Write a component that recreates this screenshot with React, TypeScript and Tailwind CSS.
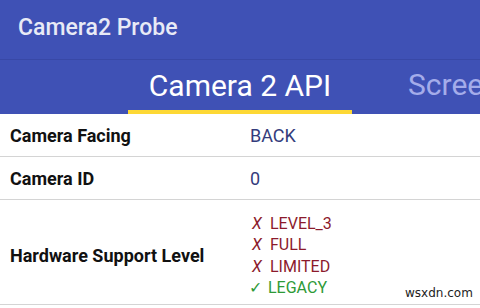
import React from 'react';

const levels = [
  { ok: false, label: 'LEVEL_3' },
  { ok: false, label: 'FULL' },
  { ok: false, label: 'LIMITED' },
  { ok: true, label: 'LEGACY' },
];

export default function App() {
  return (
    <div
      className="w-[480px] h-[308px] overflow-hidden bg-white relative"
      style={{ fontFamily: 'Roboto, "Noto Sans", sans-serif' }}
    >
      {/* App bar */}
      <div className="h-[60px] bg-[#3f51b5] border-b border-[#3848a6] flex items-center pl-[18px] pb-[2px]">
        <span className="text-[23px] font-medium text-[#e8eaf6]">Camera2 Probe</span>
      </div>

      {/* Tabs */}
      <div className="h-[54px] bg-[#3f51b5] flex items-stretch">
        <div className="w-[128px] shrink-0" />
        <div className="w-[224px] shrink-0 flex flex-col">
          <div className="flex-1 flex items-center justify-center pt-[1px]">
            <span className="text-[30px] text-white leading-none">Camera 2 API</span>
          </div>
          <div className="h-[4px] bg-[#fdd835]" />
        </div>
        <div className="flex-1 flex items-center pl-[56px] pb-[4px] whitespace-nowrap overflow-hidden">
          <span className="text-[30px] text-[#a4acea] leading-none">Scree</span>
        </div>
      </div>

      {/* Rows */}
      <div className="flex flex-col">
        <div className="h-[43px] flex items-center border-b border-[#d4d4d4] pt-[1px]">
          <div className="w-[250px] pl-[10px] text-[18px] font-bold text-[#111]">Camera Facing</div>
          <div className="text-[18px] text-[#343c7c]">BACK</div>
        </div>
        <div className="h-[43px] flex items-center border-b border-[#d4d4d4]">
          <div className="w-[250px] pl-[10px] text-[18px] font-bold text-[#111]">Camera ID</div>
          <div className="text-[18px] text-[#343c7c]">0</div>
        </div>
        <div className="h-[105px] flex items-center border-b border-[#d4d4d4] pt-[7px]">
          <div className="w-[250px] pl-[10px] text-[18px] font-bold text-[#111]">Hardware Support Level</div>
          <div className="flex flex-col text-[16px] leading-[21.4px]">
            {levels.map((l) =>
              l.ok ? (
                <div key={l.label} className="text-[#2e9a37] -ml-[1px]">
                  <span className="inline-block w-[19px]">✓</span>
                  {l.label}
                </div>
              ) : (
                <div key={l.label} className="text-[#8c1a2c] pl-[2px]">
                  <span className="inline-block w-[18px] italic">X</span>
                  {l.label}
                </div>
              )
            )}
          </div>
        </div>
      </div>

      <div
        className="absolute left-[405px] top-[284px] text-[12px] text-[#222]"
        style={{ fontFamily: '"DejaVu Sans", sans-serif' }}
      >
        wsxdn.com
      </div>
    </div>
  );
}
